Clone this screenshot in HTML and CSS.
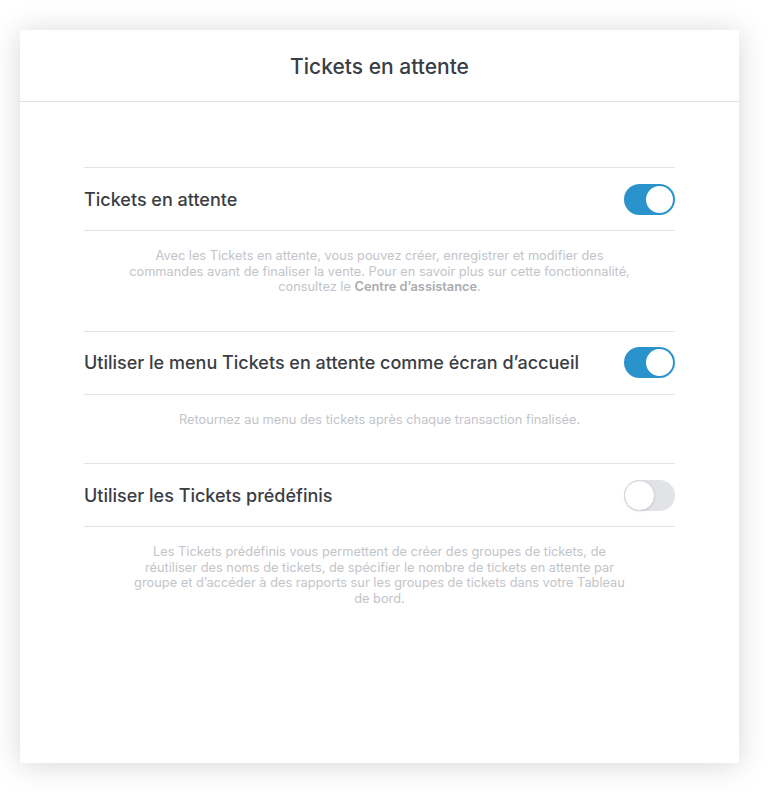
FILE: index.html
```html
<!DOCTYPE html>
<html lang="fr">
<head>
<meta charset="utf-8">
<title>Tickets en attente</title>
<link rel="stylesheet" href="styles.css">
</head>
<body>
<div class="card">
  <header class="header"><h1 class="title">Tickets en attente</h1></header>
  <main class="content">
    <section class="section">
      <div class="row">
        <span class="label">Tickets en attente</span>
        <span class="toggle on"><span class="knob"></span></span>
      </div>
      <p class="desc">Avec les Tickets en attente, vous pouvez créer, enregistrer et modifier des commandes avant de finaliser la vente. Pour en savoir plus sur cette fonctionnalité, consultez le <b class="link">Centre d’assistance</b>.</p>
    </section>
    <section class="section">
      <div class="row">
        <span class="label">Utiliser le menu Tickets en attente comme écran d’accueil</span>
        <span class="toggle on"><span class="knob"></span></span>
      </div>
      <p class="desc">Retournez au menu des tickets après chaque transaction finalisée.</p>
    </section>
    <section class="section">
      <div class="row">
        <span class="label">Utiliser les Tickets prédéfinis</span>
        <span class="toggle off"><span class="knob"></span></span>
      </div>
      <p class="desc">Les Tickets prédéfinis vous permettent de créer des groupes de tickets, de réutiliser des noms de tickets, de spécifier le nombre de tickets en attente par groupe et d’accéder à des rapports sur les groupes de tickets dans votre Tableau de bord.</p>
    </section>
  </main>
</div>
</body>
</html>
```
FILE: styles.css
```css
* { box-sizing: border-box; }
html, body { margin: 0; padding: 0; background: #ffffff; }
body {
  font-family: Inter, Roboto, "Liberation Sans", sans-serif;
  padding: 30px 40px 31px 20px;
}
.card {
  width: 719px;
  height: 733px;
  background: #fff;
  box-shadow: 0 2px 28px rgba(0, 0, 0, 0.16);
}
.header {
  height: 72px;
  padding-top: 2px;
  border-bottom: 1px solid #e1e2e4;
  display: flex;
  align-items: center;
  justify-content: center;
}
.title {
  margin: 0;
  font-size: 21px;
  font-weight: 500;
  color: #3a3e44;
}
.content {
  padding: 65px 64px 0;
}
.section { margin-bottom: 36px; }
.row {
  height: 64px;
  border-top: 1px solid #e3e4e6;
  border-bottom: 1px solid #e3e4e6;
  display: flex;
  align-items: center;
  justify-content: space-between;
}
.label {
  font-size: 18px;
  font-weight: 500;
  color: #3a3e44;
}
.toggle {
  width: 51px;
  height: 31px;
  border-radius: 16px;
  display: flex;
  align-items: center;
  padding: 0 2px;
}
.toggle.on { background: #2b93cc; justify-content: flex-end; }
.toggle.off { background: #e2e3e7; justify-content: flex-start; padding: 0; }
.knob {
  width: 28px;
  height: 28px;
  border-radius: 50%;
  background: #fff;
}
.toggle.on .knob { width: 27px; height: 27px; }
.toggle.off .knob {
  width: 31px;
  height: 31px;
  border: 1px solid #d2d3d7;
  box-shadow: 0 1px 2px rgba(0,0,0,0.08);
}
.desc {
  margin: 17px auto 0;
  max-width: 505px;
  text-align: center;
  font-size: 12.8px;
  line-height: 15.5px;
  color: #c3c4c8;
}
.link { font-weight: 600; color: #a9abb0; }
```
